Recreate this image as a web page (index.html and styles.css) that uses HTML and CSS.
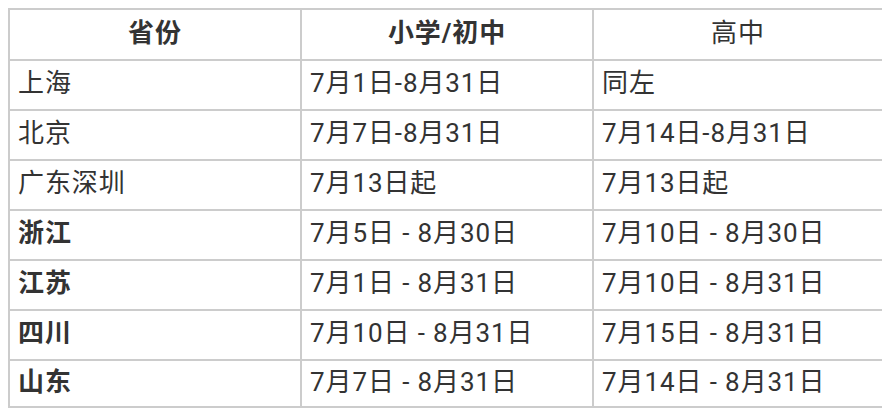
FILE: index.html
```html
<!DOCTYPE html>
<html lang="zh-CN">
<head>
<meta charset="utf-8">
<title>暑假时间</title>
<link rel="stylesheet" href="styles.css">
</head>
<body>
<table class="dates">
  <colgroup>
    <col class="c1"><col class="c2"><col class="c3">
  </colgroup>
  <thead>
    <tr>
      <th class="strong">省份</th>
      <th class="strong">小学/初中</th>
      <th class="plain">高中</th>
    </tr>
  </thead>
  <tbody>
    <tr><td>上海</td><td>7月1日-8月31日</td><td>同左</td></tr>
    <tr><td>北京</td><td>7月7日-8月31日</td><td>7月14日-8月31日</td></tr>
    <tr><td>广东深圳</td><td>7月13日起</td><td>7月13日起</td></tr>
    <tr><td class="strong">浙江</td><td>7月5日 - 8月30日</td><td>7月10日 - 8月30日</td></tr>
    <tr><td class="strong">江苏</td><td>7月1日 - 8月31日</td><td>7月10日 - 8月31日</td></tr>
    <tr><td class="strong">四川</td><td>7月10日 - 8月31日</td><td>7月15日 - 8月31日</td></tr>
    <tr class="last"><td class="strong">山东</td><td>7月7日 - 8月31日</td><td>7月14日 - 8月31日</td></tr>
  </tbody>
</table>
</body>
</html>
```
FILE: styles.css
```css
html, body {
  background: #ffffff;
}
body {
  margin: 8px;
  font-family: Roboto, "Noto Sans CJK SC", sans-serif;
  color: #333333;
}
.dates {
  width: 874px;
  border-collapse: collapse;
  table-layout: fixed;
  font-size: 26px;
  line-height: 30px;
  letter-spacing: 0.9px;
}
.c1 { width: 292px; }
.c2 { width: 292px; }
.c3 { width: 290px; }
.dates th,
.dates td {
  border: 2px solid #cccccc;
  padding: 0 8px 4px 8px;
  height: 44px;
  vertical-align: middle;
  white-space: nowrap;
}
.dates th {
  height: 45px;
  text-align: center;
}
.dates .strong {
  font-weight: 700;
}
.dates .plain {
  font-weight: 400;
}
.dates td {
  font-weight: 400;
}
.dates td.strong {
  font-weight: 700;
}
.dates .last td {
  height: 41px;
}
```
